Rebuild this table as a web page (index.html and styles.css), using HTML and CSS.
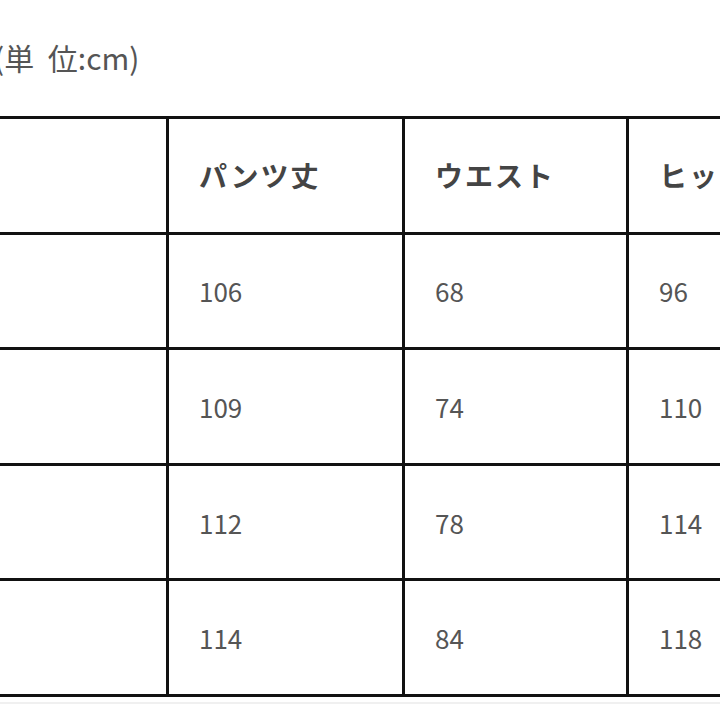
FILE: index.html
```html
<!DOCTYPE html>
<html lang="ja">
<head>
<meta charset="utf-8">
<link rel="stylesheet" href="styles.css">
</head>
<body>
<div class="page">
  <p class="unit">(単 位:cm)</p>
  <table class="size">
    <colgroup>
      <col class="c1"><col class="c2"><col class="c3"><col class="c4">
    </colgroup>
    <tr class="head"><th></th><th>パンツ丈</th><th>ウエスト</th><th>ヒップ</th></tr>
    <tr><td></td><td>106</td><td>68</td><td>96</td></tr>
    <tr><td></td><td>109</td><td>74</td><td>110</td></tr>
    <tr><td></td><td>112</td><td>78</td><td>114</td></tr>
    <tr><td></td><td>114</td><td>84</td><td>118</td></tr>
  </table>
  <div class="shade"></div>
</div>
</body>
</html>
```

FILE: styles.css
```css
html, body {
  margin: 0;
  padding: 0;
  background: #fff;
  overflow: hidden;
  width: 720px;
  height: 720px;
}
.page {
  font-family: "Noto Sans CJK JP", "Noto Sans", sans-serif;
  color: #555;
}
.unit {
  margin: 0;
  padding-top: 36px;
  height: 42px;
  line-height: 42px;
  font-size: 30px;
  margin-left: -6px;
  word-spacing: 7px;
  white-space: nowrap;
}
.size {
  margin-top: 38px;
  margin-left: -62px;
  border-collapse: collapse;
  table-layout: fixed;
  width: 912px;
}
.c1 { width: 228px; }
.c2 { width: 236px; }
.c3 { width: 224px; }
.c4 { width: 224px; }
.size th, .size td {
  border: 3px solid #111;
  height: 112.6px;
  padding: 0 0 0 30px;
  text-align: left;
  vertical-align: middle;
  white-space: nowrap;
  overflow: hidden;
}
.size th {
  font-size: 28px;
  font-weight: 700;
  color: #444;
  letter-spacing: 2px;
}
.size td {
  font-size: 26px;
  font-weight: 400;
  color: #555;
}
.shade {
  margin-top: 5px;
  height: 2px;
  background: #f0f0f0;
  width: 720px;
}
```
